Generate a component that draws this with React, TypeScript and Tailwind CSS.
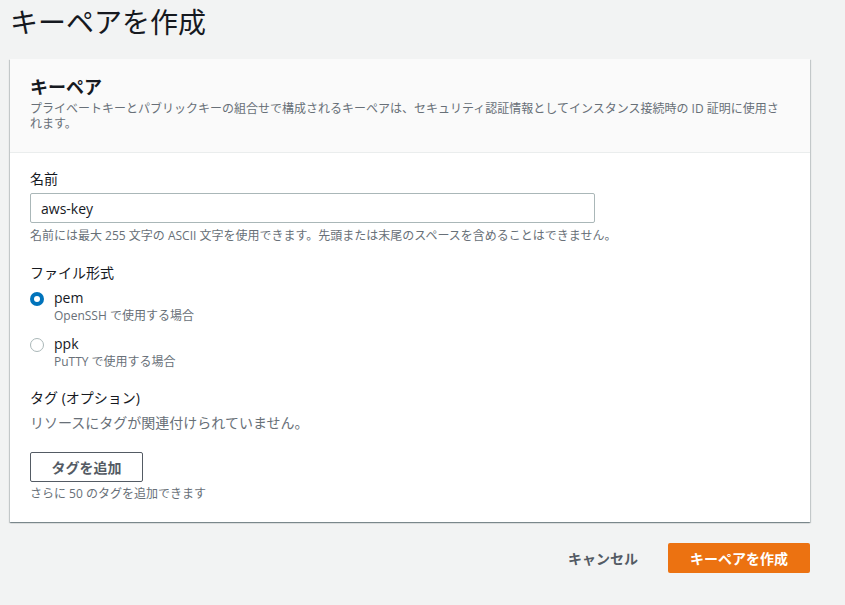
const font = { fontFamily: '"Open Sans", "Noto Sans CJK JP", sans-serif' };

export default function App() {
  return (
    <div
      className="min-h-[605px] w-[845px] bg-[#f2f3f3] text-[#16191f]"
      style={font}
    >
      <div className="px-[10px] pt-[2px]">
        <h1 className="h-[57px] text-[28px] leading-[40px] font-normal text-[#16191f]">
          キーペアを作成
        </h1>

        <div className="w-[800px] bg-white shadow-[0_1px_1px_0_rgba(0,28,36,0.3),1px_1px_1px_0_rgba(0,28,36,0.15),-1px_1px_1px_0_rgba(0,28,36,0.15)]">
          {/* header */}
          <div className="h-[94px] border-b border-[#eaeded] bg-[#fafafa] px-5 pt-[16px]">
            <h2 className="text-[18px] leading-[24px] font-bold">キーペア</h2>
            <p className="mt-[2px] text-[12px] leading-[15px] text-[#687078]">
              プライベートキーとパブリックキーの組合せで構成されるキーペアは、セキュリティ認証情報としてインスタンス接続時の ID 証明に使用されます。
            </p>
          </div>

          {/* body */}
          <div className="px-5 pt-[15px] pb-[20px]">
            <label className="block text-[14px] leading-[22px]">名前</label>
            <input
              defaultValue="aws-key"
              className="mt-[3px] block h-[30px] w-[565px] rounded-[2px] border border-[#aab7b8] px-[10px] text-[14px] text-[#16191f] outline-none"
              style={font}
            />
            <p className="mt-[5px] text-[12px] leading-[16px] text-[#687078]">
              名前には最大 255 文字の ASCII 文字を使用できます。先頭または末尾のスペースを含めることはできません。
            </p>

            <div className="mt-[18px] text-[14px] leading-[22px]">ファイル形式</div>

            <div className="mt-[4px] flex flex-col gap-[10px]">
              <div className="flex gap-[10px]">
                <span className="mt-[4px] flex h-[14px] w-[14px] items-center justify-center rounded-full bg-[#0073bb]">
                  <span className="h-[6px] w-[6px] rounded-full bg-white" />
                </span>
                <div>
                  <div className="text-[14px] leading-[20px]">pem</div>
                  <div className="text-[12px] leading-[16px] text-[#687078]">OpenSSH で使用する場合</div>
                </div>
              </div>
              <div className="flex gap-[10px]">
                <span className="mt-[4px] h-[14px] w-[14px] rounded-full border border-[#aab7b8] bg-white" />
                <div>
                  <div className="text-[14px] leading-[20px]">ppk</div>
                  <div className="text-[12px] leading-[16px] text-[#687078]">PuTTY で使用する場合</div>
                </div>
              </div>
            </div>

            <div className="mt-[17px] text-[14px] leading-[22px]">タグ (オプション)</div>
            <div className="mt-[3px] text-[14px] leading-[22px] text-[#687078]">
              リソースにタグが関連付けられていません。
            </div>

            <button
              className="mt-[18px] h-[30px] w-[113px] rounded-[2px] border border-[#545b64] bg-white text-[14px] font-bold text-[#545b64]"
              style={font}
            >
              タグを追加
            </button>
            <div className="mt-[4px] text-[12px] leading-[16px] text-[#687078]">
              さらに 50 のタグを追加できます
            </div>
          </div>
        </div>

        <div className="mt-[21px] flex w-[800px] items-center justify-end gap-[30px]">
          <button className="text-[14px] font-bold text-[#545b64]" style={font}>
            キャンセル
          </button>
          <button
            className="h-[30px] w-[142px] rounded-[2px] bg-[#ec7211] text-[14px] font-bold text-white"
            style={font}
          >
            キーペアを作成
          </button>
        </div>
      </div>
    </div>
  );
}
